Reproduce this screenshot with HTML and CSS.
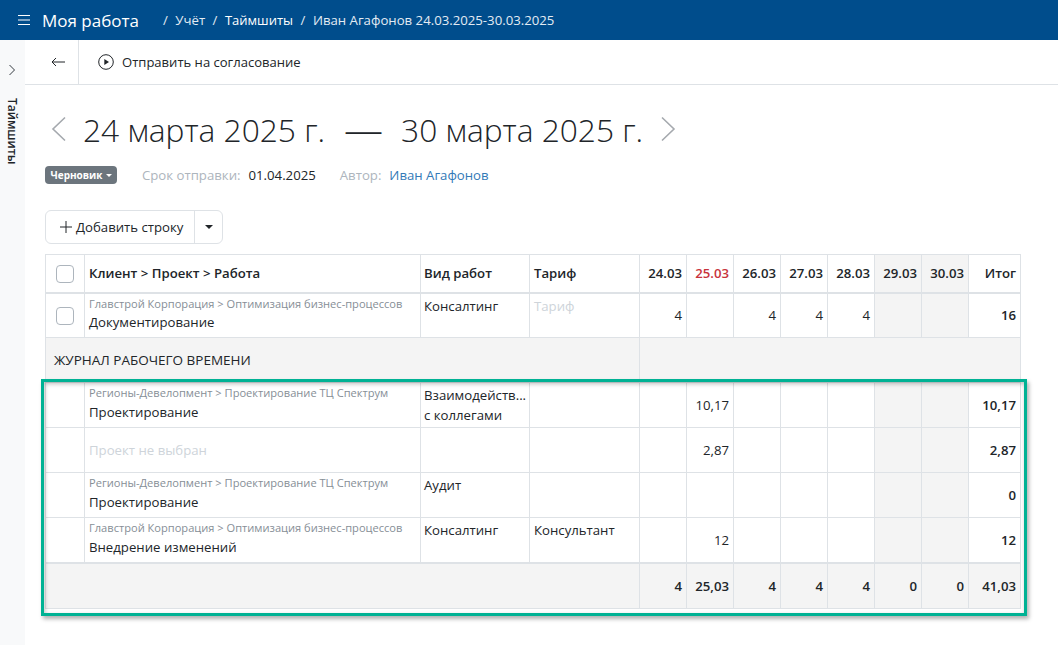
FILE: index.html
```html
<!DOCTYPE html>
<html lang="ru">
<head>
<meta charset="utf-8">
<title>Таймшит</title>
<link rel="stylesheet" href="styles.css">
</head>
<body>
<header class="topbar">
  <svg class="burger" width="14" height="12" viewBox="0 0 14 12"><path d="M1 1.5h12M1 6h12M1 10.5h12" stroke="#fff" stroke-width="1.2" fill="none"/></svg>
  <span class="app-name">Моя работа</span>
  <nav class="crumbs">
    <span class="sep">/</span><span>Учёт</span><span class="sep">/</span><b class="crumb-on">Таймшиты</b><span class="sep">/</span><span>Иван Агафонов 24.03.2025-30.03.2025</span>
  </nav>
</header>
<div class="body-row">
  <aside class="rail">
    <svg class="rail-chevron" width="8" height="12" viewBox="0 0 8 12"><path d="M1.5 1l5 5-5 5" stroke="#343a40" stroke-width="1" fill="none"/></svg>
    <span class="rail-label">Таймшиты</span>
  </aside>
  <main class="content">
    <div class="toolbar">
      <div class="back">
        <svg width="15" height="10" viewBox="0 0 15 10"><path d="M14 5H1M5 1L1 5l4 4" stroke="#212529" stroke-width="1" fill="none"/></svg>
      </div>
      <div class="action">
        <svg width="16" height="16" viewBox="0 0 16 16"><circle cx="8" cy="8" r="7.3" stroke="#212529" stroke-width="1" fill="none"/><path d="M6.3 5v6L11 8z" fill="#212529"/></svg>
        <span>Отправить на согласование</span>
      </div>
    </div>
    <div class="page">
      <h1 class="period">
        <svg class="arrow" width="16" height="26" viewBox="0 0 16 26"><path d="M14 1.5L2 13l12 11.5" stroke="#a5a9ae" stroke-width="1.6" fill="none"/></svg>
        <span class="period-text">24 марта 2025 г.</span>
        <span class="dash">—</span>
        <span class="period-text">30 марта 2025 г.</span>
        <svg class="arrow" width="16" height="26" viewBox="0 0 16 26"><path d="M2 1.5L14 13 2 24.5" stroke="#a5a9ae" stroke-width="1.6" fill="none"/></svg>
      </h1>
      <div class="meta">
        <span class="badge">Черновик<i class="caret caret-light"></i></span>
        <span class="meta-label deadline">Срок отправки:</span><span class="meta-value">01.04.2025</span>
        <span class="meta-label author">Автор:</span><span class="meta-link">Иван Агафонов</span>
      </div>
      <div class="btn-group">
        <div class="btn-main">
          <svg width="12" height="12" viewBox="0 0 12 12"><path d="M6 0v12M0 6h12" stroke="#212529" stroke-width="1" fill="none"/></svg>
          <span>Добавить строку</span>
        </div>
        <div class="btn-drop"><i class="caret"></i></div>
      </div>
      <div class="table-wrap">
        <table class="sheet">
          <colgroup>
            <col class="c-check"><col class="c-name"><col class="c-kind"><col class="c-rate">
            <col class="c-day"><col class="c-day"><col class="c-day"><col class="c-day"><col class="c-day"><col class="c-day"><col class="c-day"><col class="c-total">
          </colgroup>
          <thead>
            <tr>
              <th class="center"><span class="check"></span></th>
              <th>Клиент &gt; Проект &gt; Работа</th>
              <th class="kind">Вид работ</th>
              <th>Тариф</th>
              <th class="num">24.03</th>
              <th class="num red">25.03</th>
              <th class="num">26.03</th>
              <th class="num">27.03</th>
              <th class="num">28.03</th>
              <th class="num off">29.03</th>
              <th class="num off">30.03</th>
              <th class="num">Итог</th>
            </tr>
          </thead>
          <tbody>
            <tr>
              <td class="center"><span class="check"></span></td>
              <td class="name"><div class="path">Главстрой Корпорация &gt; Оптимизация бизнес-процессов</div><div>Документирование</div></td>
              <td class="top kind">Консалтинг</td>
              <td class="top muted">Тариф</td>
              <td class="num">4</td><td></td><td class="num">4</td><td class="num">4</td><td class="num">4</td><td class="off"></td><td class="off"></td><td class="num strong">16</td>
            </tr>
            <tr class="section">
              <td colspan="4">ЖУРНАЛ РАБОЧЕГО ВРЕМЕНИ</td>
              <td colspan="8"></td>
            </tr>
            <tr>
              <td></td>
              <td class="name"><div class="path">Регионы-Девелопмент &gt; Проектирование ТЦ Спектрум</div><div>Проектирование</div></td>
              <td class="top kind tall"><div>Взаимодейств...</div><div>с коллегами</div></td>
              <td></td>
              <td></td><td class="num">10,17</td><td></td><td></td><td></td><td class="off"></td><td class="off"></td><td class="num strong">10,17</td>
            </tr>
            <tr>
              <td></td>
              <td class="muted empty-name">Проект не выбран</td>
              <td></td>
              <td></td>
              <td></td><td class="num">2,87</td><td></td><td></td><td></td><td class="off"></td><td class="off"></td><td class="num strong">2,87</td>
            </tr>
            <tr>
              <td></td>
              <td class="name"><div class="path">Регионы-Девелопмент &gt; Проектирование ТЦ Спектрум</div><div>Проектирование</div></td>
              <td class="top kind">Аудит</td>
              <td></td>
              <td></td><td></td><td></td><td></td><td></td><td class="off"></td><td class="off"></td><td class="num strong">0</td>
            </tr>
            <tr>
              <td></td>
              <td class="name"><div class="path">Главстрой Корпорация &gt; Оптимизация бизнес-процессов</div><div>Внедрение изменений</div></td>
              <td class="top kind">Консалтинг</td>
              <td class="top">Консультант</td>
              <td></td><td class="num">12</td><td></td><td></td><td></td><td class="off"></td><td class="off"></td><td class="num strong">12</td>
            </tr>
          </tbody>
          <tfoot>
            <tr>
              <td colspan="4"></td>
              <td class="num">4</td><td class="num">25,03</td><td class="num">4</td><td class="num">4</td><td class="num">4</td><td class="num">0</td><td class="num">0</td><td class="num">41,03</td>
            </tr>
          </tfoot>
        </table>
        <div class="highlight"></div>
      </div>
    </div>
  </main>
</div>
</body>
</html>
```
FILE: styles.css
```css
* { box-sizing: border-box; }
html, body { margin: 0; height: 100%; }
body {
  font-family: "Open Sans", "Noto Sans", sans-serif;
  font-size: 13.2px;
  color: #212529;
  background: #fff;
  overflow: hidden;
}
.topbar {
  height: 40px;
  background: #004d8c;
  color: #e3ebf3;
  display: flex;
  align-items: center;
  padding-left: 17px;
}
.burger { flex: none; }
.app-name { margin-left: 11px; font-size: 17px; color: #fff; }
.crumbs { margin-left: 24px; display: flex; align-items: center; gap: 7.5px; font-size: 13.2px; }
.crumb-on { font-weight: 500; font-size: 13px; color: #fff; }
.body-row { display: flex; height: 605px; }
.rail {
  width: 25px;
  flex: none;
  background: #f8f9fa;
  display: flex;
  flex-direction: column;
  align-items: center;
  padding-top: 24px;
}
.rail-chevron { margin-right: 2px; }
.rail-label {
  writing-mode: vertical-rl;
  font-size: 12px;
  font-weight: 600;
  margin-top: 22px;
}
.content { flex: 1; min-width: 0; }
.toolbar { height: 45px; display: flex; border-bottom: 1px solid #dee2e6; }
.back {
  width: 54px;
  border-right: 1px solid #dee2e6;
  display: flex;
  align-items: center;
  justify-content: center;
  padding: 0 0 1px 14px;
}
.action { display: flex; align-items: center; gap: 8px; padding-left: 19px; font-size: 13.05px; }
.page { padding: 0 37px 0 20px; }
.period {
  margin: 22px 0 0 6px;
  height: 44px;
  display: flex;
  align-items: center;
  font-weight: 300;
  font-size: 31.7px;
  color: #212529;
}
.period-text { white-space: nowrap; }
.period .arrow:first-child { margin-right: 16px; }
.period .arrow:last-child { margin-left: 17px; }
.dash { margin: 0 18px 0 19px; font-size: 39px; line-height: 44px; }
.meta { margin-top: 15px; display: flex; align-items: center; height: 18px; }
.badge {
  background: #6c757d;
  color: #fff;
  font-size: 10px;
  font-weight: 700;
  border-radius: 4px;
  height: 18px;
  width: 72px;
  display: inline-flex;
  align-items: center;
  justify-content: center;
  gap: 3px;
}
.meta-label { color: #adb5bd; }
.meta-label.deadline { margin-left: 25px; margin-right: 8px; }
.meta-label.author { margin-left: 24px; margin-right: 8px; }
.meta-link { color: #337ab7; }
.caret {
  display: inline-block;
  width: 0;
  height: 0;
  border-left: 4px solid transparent;
  border-right: 4px solid transparent;
  border-top: 4px solid #212529;
}
.caret-light { border-width: 3px 3px 0; border-top-color: #fff; }
.btn-group {
  margin-top: 26px;
  width: 178px;
  height: 34px;
  border: 1px solid #dee2e6;
  border-radius: 6px;
  display: flex;
}
.btn-main {
  flex: 1;
  display: flex;
  align-items: center;
  gap: 4px;
  padding-left: 14px;
  border-right: 1px solid #dee2e6;
}
.btn-drop { width: 27px; display: flex; align-items: center; justify-content: center; }
.table-wrap { position: relative; margin-top: 10px; }
.sheet { width: 975px; border-collapse: collapse; table-layout: fixed; line-height: 18px; }
.c-check { width: 39px; }
.c-name { width: 336px; }
.c-kind { width: 109px; }
.c-rate { width: 110px; }
.c-day { width: 47px; }
.c-total { width: 52px; }
.sheet th, .sheet td { border: 1px solid #dee2e6; padding: 4px; vertical-align: middle; }
.sheet th { text-align: left; font-weight: 600; height: 38px; border-bottom-width: 2px; }
.sheet tbody tr { height: 45px; }
.sheet th.num, .sheet td.num { text-align: right; }
.sheet .center { text-align: center; padding: 0; }
.sheet .top { vertical-align: top; padding-top: 3px; }
.sheet .kind { padding-left: 3px; }
.sheet .tall { line-height: 20px; padding-top: 2px; padding-right: 0; padding-bottom: 0; white-space: nowrap; }
.sheet .name { padding-top: 0; padding-bottom: 0; vertical-align: top; line-height: 19.5px; }
.sheet .off { background: #f4f4f4; }
.sheet .red { color: #c8323c; }
.sheet .strong { font-weight: 600; }
.sheet .muted { color: #ced4da; }
.empty-name { font-weight: 500; }
.path { font-size: 11.1px; color: #868e96; }
.check {
  display: inline-block;
  width: 18px;
  height: 18px;
  border: 1px solid #adb5bd;
  border-radius: 4px;
  vertical-align: middle;
}
.section td { background: #f4f4f4; padding-left: 8px; font-size: 13.5px; }
.sheet tfoot td { background: #f4f4f4; font-weight: 600; height: 46px; border-top-width: 2px; }
.highlight {
  position: absolute;
  left: -4px;
  top: 125px;
  width: 986px;
  height: 237px;
  border: 3.5px solid #00b294;
  box-shadow: 2px 3px 4px rgba(0, 0, 0, 0.3), inset 1px 2px 4px rgba(0, 0, 0, 0.25);
  pointer-events: none;
}
```
